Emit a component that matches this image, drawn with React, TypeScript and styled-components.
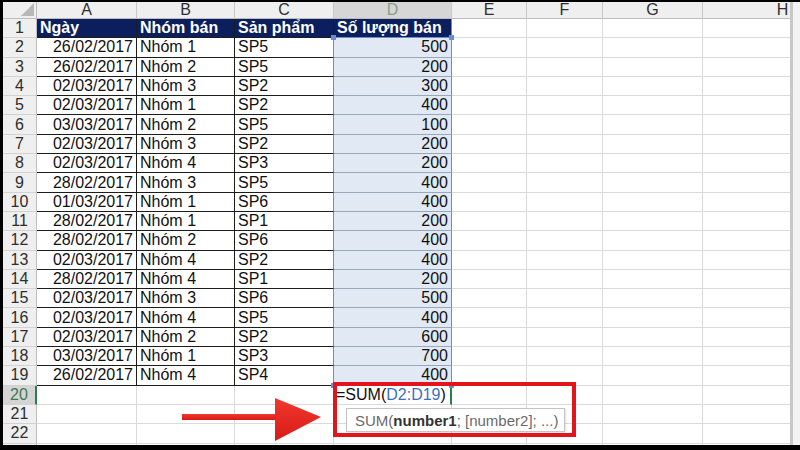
import React from 'react';
import styled, { createGlobalStyle, css } from 'styled-components';

const Global = createGlobalStyle`
  html, body { margin: 0; padding: 0; background: #000; }
  body { width: 800px; height: 450px; overflow: hidden; font-family: "Liberation Sans", Arial, sans-serif; }
`;

const COLS = '34px 100px 98px 99px 118px 75px 76px 100px 160px';
const GRID = '#dadada';
const DARK = '#1c1c1c';
const BLUE = '#6a8ecb';
const DLINE = '#9aa7ba';
const NAVY = '#0b1f5f';
const RANGE_BG = '#e1e9f4';

const Frame = styled.div`
  width: 800px;
  height: 450px;
  box-sizing: border-box;
  padding: 2px 0 5px 3px;
  background: #000;
  display: flex;
`;

const Sheet = styled.div`
  position: relative;
  flex: 1;
  display: flex;
  background: #fff;
  overflow: hidden;
`;

const Grid = styled.div`
  width: 787px;
  overflow: hidden;
  display: flex;
  flex-direction: column;
`;

const Edge = styled.div`
  width: 3px;
  background: #c8c8c8;
`;

const Margin = styled.div`
  flex: 1;
  background: #f3f3f3;
`;

const Row = styled.div<{ $h: number }>`
  display: grid;
  grid-template-columns: ${COLS};
  height: ${(p) => p.$h}px;
  flex: none;
`;

const ColHead = styled.div<{ $sel?: boolean }>`
  box-sizing: border-box;
  background: ${(p) => (p.$sel ? '#d6d6d6' : '#efefef')};
  color: ${(p) => (p.$sel ? '#86a08c' : '#2e2e2e')};
  border-right: 1px solid #c9c9c9;
  border-bottom: 1px solid #bdbdbd;
  font-size: 16px;
  line-height: 16px;
  text-align: center;
`;

const Corner = styled.div`
  position: relative;
  box-sizing: border-box;
  background: #efefef;
  border-right: 1px solid #bdbdbd;
  border-bottom: 1px solid #bdbdbd;
  &::after {
    content: '';
    position: absolute;
    right: 2px;
    bottom: 2px;
    width: 0;
    height: 0;
    border-left: 13px solid transparent;
    border-bottom: 13px solid #b8b8b8;
  }
`;

const RowHead = styled.div<{ $sel?: boolean }>`
  box-sizing: border-box;
  background: ${(p) => (p.$sel ? '#d4d4d4' : '#efefef')};
  color: ${(p) => (p.$sel ? '#3f7a52' : '#2e2e2e')};
  border-bottom: 1px solid #d2d2d2;
  border-right: ${(p) => (p.$sel ? '2px solid #2f7d48' : '1px solid #bdbdbd')};
  font-size: 16px;
  display: flex;
  align-items: center;
  justify-content: center;
`;

type CellProps = {
  $align?: 'left' | 'right';
  $bg?: string;
  $color?: string;
  $bold?: boolean;
  $br?: string;
  $bb?: string;
  $handleTop?: boolean;
  $handleBottom?: boolean;
};

const handle = css`
  content: '';
  position: absolute;
  width: 5px;
  height: 5px;
  background: ${BLUE};
  z-index: 2;
`;

const Cell = styled.div<CellProps>`
  position: relative;
  box-sizing: border-box;
  background: ${(p) => p.$bg || '#fff'};
  color: ${(p) => p.$color || '#111'};
  font-weight: ${(p) => (p.$bold ? 700 : 400)};
  font-size: 16px;
  border-right: 1px solid ${(p) => p.$br || GRID};
  border-bottom: 1px solid ${(p) => p.$bb || GRID};
  padding: 0 3px 0 3px;
  display: flex;
  align-items: center;
  justify-content: ${(p) => (p.$align === 'right' ? 'flex-end' : 'flex-start')};
  white-space: nowrap;
  ${(p) =>
    p.$handleTop &&
    css`
      &::before { ${handle}; left: -3px; top: -3px; }
      &::after { ${handle}; right: -3px; top: -3px; }
    `}
  ${(p) =>
    p.$handleBottom &&
    css`
      &::before { ${handle}; left: -3px; bottom: -3px; }
      &::after { ${handle}; right: -3px; bottom: -3px; }
    `}
`;

const ActiveCell = styled(Cell)`
  overflow: visible;
  z-index: 1;
  color: #111;
  padding-left: 2px;
  border-right: 2px solid #2f7d48;
`;

const Ref = styled.span`
  color: #3d6fc0;
`;

const Tooltip = styled.div`
  position: absolute;
  left: 343px;
  top: 406px;
  width: 219px;
  height: 24px;
  box-sizing: border-box;
  background: #fff;
  border: 1px solid #c4c4c4;
  box-shadow: 1px 1px 2px rgba(0, 0, 0, 0.12);
  color: #6a6a6a;
  font-size: 15px;
  padding-left: 8px;
  display: flex;
  align-items: center;
  white-space: nowrap;
  z-index: 3;
  b { color: #333; font-weight: 700; }
`;

const Highlight = styled.div`
  position: absolute;
  left: 330px;
  top: 380px;
  width: 243px;
  height: 55px;
  box-sizing: border-box;
  border: 4px solid #e3151c;
  z-index: 4;
`;

const Arrow = styled.svg`
  position: absolute;
  left: 175px;
  top: 393px;
  z-index: 4;
`;

const data: [string, string, string, string][] = [
  ['26/02/2017', 'Nhóm 1', 'SP5', '500'],
  ['26/02/2017', 'Nhóm 2', 'SP5', '200'],
  ['02/03/2017', 'Nhóm 3', 'SP2', '300'],
  ['02/03/2017', 'Nhóm 1', 'SP2', '400'],
  ['03/03/2017', 'Nhóm 2', 'SP5', '100'],
  ['02/03/2017', 'Nhóm 3', 'SP2', '200'],
  ['02/03/2017', 'Nhóm 4', 'SP3', '200'],
  ['28/02/2017', 'Nhóm 3', 'SP5', '400'],
  ['01/03/2017', 'Nhóm 1', 'SP6', '400'],
  ['28/02/2017', 'Nhóm 1', 'SP1', '200'],
  ['28/02/2017', 'Nhóm 2', 'SP6', '400'],
  ['02/03/2017', 'Nhóm 4', 'SP2', '400'],
  ['28/02/2017', 'Nhóm 4', 'SP1', '200'],
  ['02/03/2017', 'Nhóm 3', 'SP6', '500'],
  ['02/03/2017', 'Nhóm 4', 'SP5', '400'],
  ['02/03/2017', 'Nhóm 2', 'SP2', '600'],
  ['03/03/2017', 'Nhóm 1', 'SP3', '700'],
  ['26/02/2017', 'Nhóm 4', 'SP4', '400'],
];

const letters = ['A', 'B', 'C', 'D', 'E', 'F', 'G', 'H'];
const ROW_H = 19.3;

function EmptyCells({ n }: { n: number }) {
  return (
    <>
      {Array.from({ length: n }).map((_, i) => (
        <Cell key={i} />
      ))}
    </>
  );
}

export default function App() {
  return (
    <>
      <Global />
      <Frame>
        <Sheet>
          <Grid>
            <Row $h={17}>
              <Corner />
              {letters.map((l) => (
                <ColHead key={l} $sel={l === 'D'}>
                  {l}
                </ColHead>
              ))}
            </Row>
            <Row $h={ROW_H}>
              <RowHead>1</RowHead>
              <Cell $bg={NAVY} $color="#fff" $bold $br={DARK} $bb={DARK}>Ngày</Cell>
              <Cell $bg={NAVY} $color="#fff" $bold $br={DARK} $bb={DARK}>Nhóm bán</Cell>
              <Cell $bg={NAVY} $color="#fff" $bold $br={DARK} $bb={DARK}>Sản phẩm</Cell>
              <Cell $bg={NAVY} $color="#fff" $bold $br={BLUE} $bb={BLUE}>Số lượng bán</Cell>
              <EmptyCells n={4} />
            </Row>
            {data.map((r, i) => {
              const last = i === data.length - 1;
              return (
                <Row $h={ROW_H} key={i}>
                  <RowHead>{i + 2}</RowHead>
                  <Cell $align="right" $br={DARK} $bb={DARK}>{r[0]}</Cell>
                  <Cell $br={DARK} $bb={DARK}>{r[1]}</Cell>
                  <Cell $br={BLUE} $bb={DARK}>{r[2]}</Cell>
                  <Cell
                    $align="right"
                    $bg={RANGE_BG}
                    $br={BLUE}
                    $bb={last ? BLUE : DLINE}
                    $handleTop={i === 0}
                    $handleBottom={last}
                  >
                    {r[3]}
                  </Cell>
                  <EmptyCells n={4} />
                </Row>
              );
            })}
            <Row $h={ROW_H}>
              <RowHead $sel>20</RowHead>
              <EmptyCells n={3} />
              <ActiveCell>
                =SUM(<Ref>D2:D19</Ref>)
              </ActiveCell>
              <EmptyCells n={4} />
            </Row>
            {[21, 22].map((n) => (
              <Row $h={ROW_H} key={n}>
                <RowHead>{n}</RowHead>
                <EmptyCells n={8} />
              </Row>
            ))}
            <Row $h={ROW_H}>
              <RowHead />
              <EmptyCells n={8} />
            </Row>
          </Grid>
          <Edge />
          <Margin />
          <Tooltip>
            SUM(<b>number1</b>; [number2]; ...)
          </Tooltip>
          <Highlight />
          <Arrow width="150" height="50" viewBox="0 0 150 50">
            <defs>
              <linearGradient id="ag" x1="0" y1="0" x2="0" y2="1">
                <stop offset="0" stopColor="#f0392f" />
                <stop offset="1" stopColor="#d81a16" />
              </linearGradient>
            </defs>
            <rect x="4" y="19" width="100" height="6" fill="url(#ag)" />
            <polygon points="97,3 143,22 97,46" fill="url(#ag)" />
          </Arrow>
        </Sheet>
      </Frame>
    </>
  );
}
